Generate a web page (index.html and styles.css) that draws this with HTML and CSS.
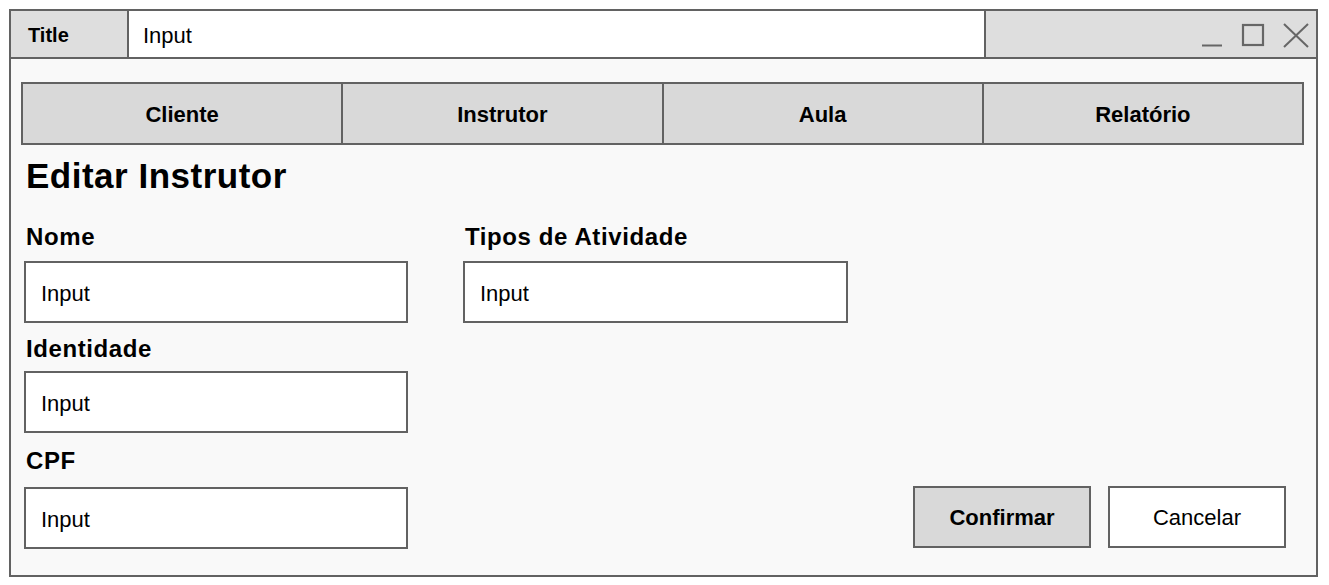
FILE: index.html
```html
<!DOCTYPE html>
<html lang="pt">
<head>
<meta charset="utf-8">
<title>Editar Instrutor</title>
<link rel="stylesheet" href="styles.css">
</head>
<body>
<div class="window">
  <div class="titlebar">
    <div class="titlebar__title">Title</div>
    <div class="titlebar__input">Input</div>
    <div class="titlebar__controls">
      <svg class="titlebar__icons" width="110" height="26" viewBox="0 0 110 26" aria-hidden="true">
        <line x1="2" y1="23.5" x2="22" y2="23.5" stroke="#666" stroke-width="2"/>
        <rect x="43" y="3" width="20" height="20" fill="none" stroke="#666" stroke-width="2.2"/>
        <line x1="84" y1="2" x2="108" y2="25" stroke="#666" stroke-width="2"/>
        <line x1="108" y1="2" x2="84" y2="25" stroke="#666" stroke-width="2"/>
      </svg>
    </div>
  </div>
  <div class="content">
    <nav class="tabs">
      <div class="tab">Cliente</div>
      <div class="tab">Instrutor</div>
      <div class="tab">Aula</div>
      <div class="tab">Relatório</div>
    </nav>
    <h1 class="heading">Editar Instrutor</h1>
    <div class="form">
      <div class="field field--nome">
        <div class="field__label">Nome</div>
        <div class="field__input">Input</div>
      </div>
      <div class="field field--tipos">
        <div class="field__label">Tipos de Atividade</div>
        <div class="field__input">Input</div>
      </div>
      <div class="field field--identidade">
        <div class="field__label">Identidade</div>
        <div class="field__input">Input</div>
      </div>
      <div class="field field--cpf">
        <div class="field__label">CPF</div>
        <div class="field__input">Input</div>
      </div>
      <div class="actions">
        <div class="btn btn--primary">Confirmar</div>
        <div class="btn">Cancelar</div>
      </div>
    </div>
  </div>
</div>
</body>
</html>
```

FILE: styles.css
```css
* { box-sizing: border-box; }

html, body {
  margin: 0;
  padding: 0;
  background: #ffffff;
}

body {
  font-family: "Liberation Sans", Arial, sans-serif;
  color: #000;
}

.window {
  margin: 9px;
  width: 1309px;
  height: 568px;
  border: 2px solid #626262;
  background: #f9f9f9;
  display: flex;
  flex-direction: column;
}

.titlebar {
  display: flex;
  height: 48px;
  border-bottom: 2px solid #626262;
  flex-shrink: 0;
}

.titlebar__title {
  width: 118px;
  background: #dedede;
  border-right: 2px solid #626262;
  font-weight: bold;
  font-size: 20px;
  display: flex;
  align-items: center;
  padding-left: 17px;
  padding-top: 3px;
}

.titlebar__input {
  flex: 1;
  background: #fff;
  border-right: 2px solid #626262;
  font-size: 22px;
  display: flex;
  align-items: center;
  padding-left: 14px;
  padding-top: 3px;
}

.titlebar__controls {
  width: 330px;
  background: #dedede;
  display: flex;
  align-items: center;
  justify-content: flex-end;
  padding-right: 6px;
  padding-top: 1px;
}

.titlebar__icons { display: block; }

.content {
  flex: 1;
  padding: 23px 12px 0 10px;
}

.tabs {
  display: flex;
  height: 63px;
  border: 2px solid #626262;
  background: #d9d9d9;
}

.tab {
  flex: 1;
  display: flex;
  align-items: center;
  justify-content: center;
  font-weight: bold;
  font-size: 22px;
  padding-top: 3px;
}

.tab + .tab { border-left: 2px solid #626262; }

.heading {
  margin: 11px 0 0 0;
  padding-left: 5px;
  font-size: 35px;
  line-height: 40px;
  letter-spacing: 0.5px;
  font-weight: bold;
}

.form {
  margin-top: 27px;
  padding: 0 18px 0 3px;
  display: grid;
  grid-template-columns: 384px 385px 1fr;
  grid-template-rows: auto auto auto;
  column-gap: 55px;
  row-gap: 12px;
}

.field--nome { grid-column: 1; grid-row: 1; }
.field--tipos { grid-column: 2; grid-row: 1; }
.field--identidade { grid-column: 1; grid-row: 2; }
.field--cpf { grid-column: 1; grid-row: 3; }

.field__label {
  font-weight: bold;
  font-size: 24px;
  line-height: 28px;
  letter-spacing: 0.6px;
  padding-left: 2px;
  margin-bottom: 10px;
}

.field--identidade .field__label { margin-bottom: 8px; }
.field--cpf { margin-top: 2px; }
.field--cpf .field__label { margin-bottom: 12px; }

.field__input {
  height: 62px;
  border: 2px solid #626262;
  background: #fff;
  font-size: 22px;
  display: flex;
  align-items: center;
  padding-left: 15px;
  padding-top: 4px;
}

.actions {
  grid-column: 3;
  grid-row: 3;
  align-self: end;
  display: flex;
  justify-content: flex-end;
  gap: 17px;
  margin-bottom: 1px;
}

.btn {
  width: 178px;
  height: 62px;
  border: 2px solid #626262;
  background: #fff;
  font-size: 22px;
  display: flex;
  align-items: center;
  justify-content: center;
  padding-top: 2px;
}

.btn--primary {
  background: #d9d9d9;
  font-weight: bold;
}
```
